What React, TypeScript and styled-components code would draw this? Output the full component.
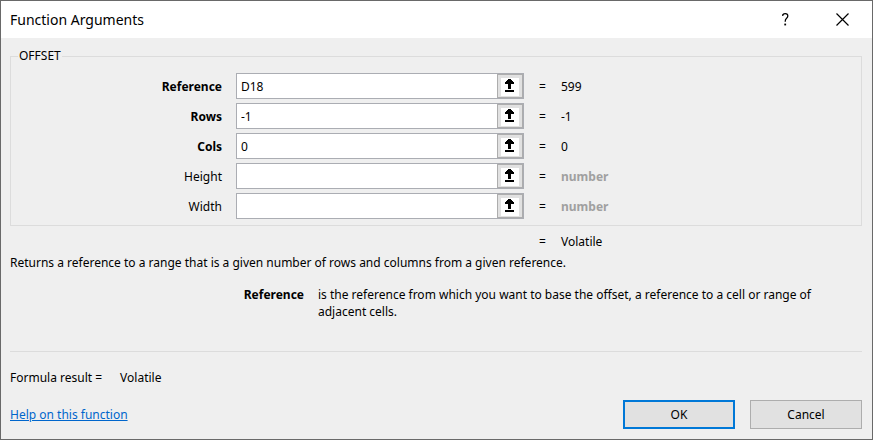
import React, { useState } from "react";
import styled, { createGlobalStyle } from "styled-components";

const GlobalStyle = createGlobalStyle`
  * {
    box-sizing: border-box;
  }
  body {
    margin: 0;
    background: #efefef;
    color: #000;
    font-family: "Noto Sans", "Open Sans", sans-serif;
    font-size: 12px;
    line-height: 17px;
  }
  button,
  input {
    font: inherit;
    color: inherit;
  }
`;

const Dialog = styled.form`
  display: flex;
  flex-direction: column;
  min-height: 100vh;
  border: 1px solid #696969;
  background: #efefef;
`;

const TitleBar = styled.header`
  display: flex;
  align-items: center;
  height: 37px;
  padding: 0 1px 0 9px;
  background: #fff;
`;

const Title = styled.h1`
  flex: 1;
  margin: 0;
  font-size: 14px;
  line-height: 20px;
  font-weight: 400;
`;

const CaptionButton = styled.button`
  display: flex;
  align-items: center;
  justify-content: center;
  width: 57px;
  height: 37px;
  padding: 0;
  border: 0;
  background: transparent;
`;

const Body = styled.main`
  flex: 1;
  display: flex;
  flex-direction: column;
  padding: 10px 10px 10px 9px;
`;

const ArgumentGroup = styled.fieldset`
  display: grid;
  gap: 4px;
  min-width: 0;
  margin: 0;
  padding: 9px 7px 6px;
  border: 1px solid #dcdcdc;
`;

const GroupName = styled.legend`
  padding: 0 1px;
  line-height: 16px;
`;

const ArgumentRow = styled.div`
  display: grid;
  grid-template-columns: 204px 288px 9px 1fr;
  align-items: center;
  column-gap: 14px;
`;

const ArgumentLabel = styled.label<{ $required: boolean }>`
  text-align: right;
  font-weight: ${(p) => (p.$required ? 700 : 400)};
`;

const RefEdit = styled.div`
  display: flex;
  height: 26px;
  border: 1px solid #abadb3;
  background: #fff;
`;

const RefInput = styled.input`
  flex: 1;
  min-width: 0;
  padding: 0 4px;
  border: 0;
  outline: 0;
  background: transparent;
`;

const CollapseButton = styled.button`
  display: flex;
  align-items: center;
  justify-content: center;
  width: 26px;
  padding: 2px 0 0;
  border: 1px solid #adadad;
  background: #e1e1e1;
`;

const Equals = styled.span`
  padding-left: 1px;
`;

const Value = styled.output<{ $muted?: boolean }>`
  color: ${(p) => (p.$muted ? "#a0a0a0" : "#000")};
  font-weight: ${(p) => (p.$muted ? 700 : 400)};
`;

const ResultRow = styled(ArgumentRow)`
  margin-top: 7px;
  padding: 0 8px;
`;

const Description = styled.p`
  margin: 4px 0 0;
`;

const ArgumentHelp = styled.dl`
  display: grid;
  grid-template-columns: 294px 1fr;
  column-gap: 14px;
  margin: 15px 0 0;
  padding-right: 20px;
`;

const HelpTerm = styled.dt`
  text-align: right;
  font-weight: 700;
`;

const HelpText = styled.dd`
  margin: 0;
`;

const Divider = styled.hr`
  width: 100%;
  height: 1px;
  margin: 31px 0 0;
  border: 0;
  background: #dcdcdc;
`;

const FormulaResult = styled.div`
  display: flex;
  gap: 18px;
  margin-top: 17px;
`;

const Footer = styled.footer`
  display: flex;
  align-items: center;
  gap: 15px;
  margin-top: 14px;
`;

const HelpLink = styled.a`
  margin-right: auto;
  color: #0066cc;
  text-decoration: underline;
`;

const DialogButton = styled.button<{ $primary?: boolean }>`
  width: 112px;
  height: 29px;
  padding: 0;
  border: ${(p) => (p.$primary ? "2px solid #0078d7" : "1px solid #adadad")};
  background: #e1e1e1;
`;

const CloseIcon = () => (
  <svg width="13" height="13" viewBox="0 0 13 13" aria-hidden="true">
    <path d="M0.5 0.5L12.5 12.5M12.5 0.5L0.5 12.5" stroke="#000" strokeWidth="1.2" fill="none" />
  </svg>
);

const HelpIcon = () => (
  <svg width="7" height="13" viewBox="0 0 7 13" aria-hidden="true">
    <path d="M0.8 3V1.7Q1.8 0.7 3.3 0.7Q5.8 0.7 5.8 3Q5.8 4.3 4.4 5.5Q3.2 6.5 3.2 8.8" stroke="#000" strokeWidth="1.3" fill="none" />
    <path d="M2.3 10.6h1.8v1.8h-1.8z" fill="#000" />
  </svg>
);

const CollapseIcon = () => (
  <svg width="18" height="18" viewBox="0 0 18 18" shapeRendering="crispEdges" aria-hidden="true">
    <path d="M0 0h18v18H0z" fill="#fff" />
    <path d="M7 1h3v1h1v1h1v1h1v2h-3v5H7V6H4V4h1V3h1V2h1zM4 12h9v2H4z" fill="#000" />
  </svg>
);

const ARGUMENTS = [
  { name: "Reference", required: true, text: "D18", value: "599" },
  { name: "Rows", required: true, text: "-1", value: "-1" },
  { name: "Cols", required: true, text: "0", value: "0" },
  { name: "Height", required: false, text: "", value: "" },
  { name: "Width", required: false, text: "", value: "" },
];

export default function App() {
  const [texts, setTexts] = useState(ARGUMENTS.map((a) => a.text));

  return (
    <>
      <GlobalStyle />
      <Dialog aria-labelledby="dialog-title" onSubmit={(e) => e.preventDefault()}>
        <TitleBar>
          <Title id="dialog-title">Function Arguments</Title>
          <CaptionButton type="button" aria-label="Help">
            <HelpIcon />
          </CaptionButton>
          <CaptionButton type="button" aria-label="Close">
            <CloseIcon />
          </CaptionButton>
        </TitleBar>
        <Body>
          <ArgumentGroup>
            <GroupName>OFFSET</GroupName>
            {ARGUMENTS.map((arg, i) => (
              <ArgumentRow key={arg.name}>
                <ArgumentLabel htmlFor={`arg-${arg.name}`} $required={arg.required}>
                  {arg.name}
                </ArgumentLabel>
                <RefEdit>
                  <RefInput
                    id={`arg-${arg.name}`}
                    value={texts[i]}
                    onChange={(e) => setTexts(texts.map((t, j) => (j === i ? e.target.value : t)))}
                  />
                  <CollapseButton type="button" aria-label={`Select ${arg.name} range`}>
                    <CollapseIcon />
                  </CollapseButton>
                </RefEdit>
                <Equals>=</Equals>
                <Value htmlFor={`arg-${arg.name}`} $muted={!arg.value}>
                  {arg.value || "number"}
                </Value>
              </ArgumentRow>
            ))}
          </ArgumentGroup>
          <ResultRow>
            <span />
            <span />
            <Equals>=</Equals>
            <Value>Volatile</Value>
          </ResultRow>
          <Description>
            Returns a reference to a range that is a given number of rows and columns from a given reference.
          </Description>
          <ArgumentHelp>
            <HelpTerm>Reference</HelpTerm>
            <HelpText>
              is the reference from which you want to base the offset, a reference to a cell or range of adjacent cells.
            </HelpText>
          </ArgumentHelp>
          <Divider />
          <FormulaResult>
            <span>Formula result =</span>
            <output>Volatile</output>
          </FormulaResult>
          <Footer>
            <HelpLink href="#help">Help on this function</HelpLink>
            <DialogButton type="submit" $primary>
              OK
            </DialogButton>
            <DialogButton type="button">Cancel</DialogButton>
          </Footer>
        </Body>
      </Dialog>
    </>
  );
}
